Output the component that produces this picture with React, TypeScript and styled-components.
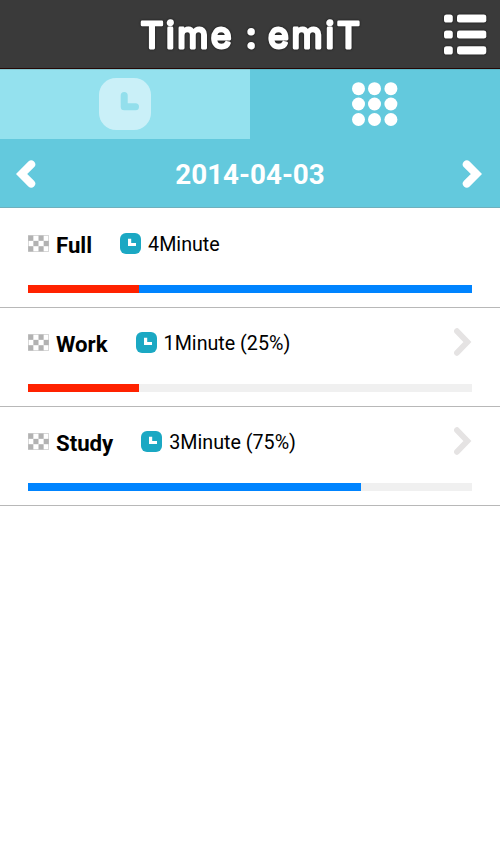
import styled, { createGlobalStyle } from "styled-components";

type Segment = {
  color: string;
  percent: number;
};

type Entry = {
  label: string;
  time: string;
  segments: Segment[];
  hasDetail: boolean;
};

const RED = "#ff2200";
const BLUE = "#0084ff";

const entries: Entry[] = [
  {
    label: "Full",
    time: "4Minute",
    segments: [
      { color: RED, percent: 25 },
      { color: BLUE, percent: 75 },
    ],
    hasDetail: false,
  },
  {
    label: "Work",
    time: "1Minute (25%)",
    segments: [{ color: RED, percent: 25 }],
    hasDetail: true,
  },
  {
    label: "Study",
    time: "3Minute (75%)",
    segments: [{ color: BLUE, percent: 75 }],
    hasDetail: true,
  },
];

const Logo = () => (
  <LogoSvg width="240" height="60" viewBox="0 0 240 60">
    <text x="10.5" y="44" textLength="91" lengthAdjust="spacing">
      Time
    </text>
    <text x="121" y="44" textAnchor="middle">
      :
    </text>
    <text x="138" y="44" textLength="92" lengthAdjust="spacing">
      emiT
    </text>
  </LogoSvg>
);

const MenuIcon = () => (
  <MenuSvg width="44" height="42" viewBox="0 0 44 42">
    {[1.4, 17.4, 33.3].map((y) => (
      <g key={y} fill="#fff">
        <rect x="1" y={y} width="8.8" height="8.2" rx="2.6" />
        <rect x="14" y={y} width="29.3" height="8.2" rx="2.4" />
      </g>
    ))}
  </MenuSvg>
);

const ClockTabIcon = () => (
  <svg width="52" height="52" viewBox="0 0 52 52">
    <rect width="52" height="52" rx="17" fill="#caf0f8" />
    <path
      d="M25.2 17.5V28.8H36.5"
      fill="none"
      stroke="#93dfec"
      strokeWidth="7"
      strokeLinecap="round"
      strokeLinejoin="round"
    />
  </svg>
);

const GridIcon = () => (
  <svg width="46" height="46" viewBox="0 0 46 46">
    {[6.7, 22, 37.5].map((y) =>
      [6.5, 22.5, 38.9].map((x) => (
        <circle key={`${x}-${y}`} cx={x} cy={y} r="6.5" fill="#fff" />
      ))
    )}
  </svg>
);

const CheckerIcon = () => (
  <svg width="21" height="17" viewBox="0 0 21 17">
    <rect x=".5" y=".5" width="20" height="16" fill="#fff" stroke="#d8d8d8" />
    {[0, 1, 2].map((row) =>
      [0, 1, 2, 3]
        .filter((col) => (row + col) % 2 === 0)
        .map((col) => (
          <rect
            key={`${row}-${col}`}
            x={0.2 + col * 5.15}
            y={0.5 + row * 5.35}
            width="5.15"
            height="5.35"
            fill="#b2b2b2"
          />
        ))
    )}
  </svg>
);

const ClockIcon = () => (
  <svg width="21" height="21" viewBox="0 0 21 21">
    <rect width="21" height="21" rx="6" fill="#1ba8c3" />
    <path d="M8 5.7H11.2V10H16V13H8Z" fill="#fff" />
  </svg>
);

const Arrow = ({ flip }: { flip?: boolean }) => (
  <svg width="20" height="28" viewBox="0 0 20 28">
    <g transform={flip ? "translate(20 0) scale(-1 1)" : undefined}>
      <path
        d="M4.8 4.4L14.4 14L4.8 23.6"
        fill="none"
        stroke="#fff"
        strokeWidth="8"
        strokeLinecap="round"
      />
    </g>
  </svg>
);

const DetailArrow = () => (
  <svg width="18" height="28" viewBox="0 0 18 28">
    <path
      d="M3 3.2L13.4 14L3 24.8"
      fill="none"
      stroke="#e5e3e3"
      strokeWidth="5.8"
      strokeLinecap="round"
    />
  </svg>
);

export default function App() {
  return (
    <Page>
      <GlobalStyle />
      <Header>
        <Logo />
        <MenuIcon />
      </Header>
      <Tabs>
        <Tab $muted>
          <ClockTabIcon />
        </Tab>
        <Tab>
          <GridIcon />
        </Tab>
      </Tabs>
      <DateBar>
        <Arrow flip />
        <DateText>2014-04-03</DateText>
        <Arrow />
      </DateBar>
      <List>
        {entries.map((entry) => (
          <Item key={entry.label}>
            <ItemHead>
              <CheckerIcon />
              <Label>{entry.label}</Label>
              <ClockIcon />
              <Time>{entry.time}</Time>
              {entry.hasDetail && <DetailArrow />}
            </ItemHead>
            <Track>
              {entry.segments.map(({ color, percent }) => (
                <Bar
                  key={color}
                  $color={color}
                  style={{ width: `${percent}%` }}
                />
              ))}
            </Track>
          </Item>
        ))}
      </List>
    </Page>
  );
}

const GlobalStyle = createGlobalStyle`
  * {
    box-sizing: border-box;
  }

  body {
    margin: 0;
    background: #fff;
    font-family: Roboto, sans-serif;
  }

  svg {
    display: block;
    flex-shrink: 0;
  }
`;

const Page = styled.div`
  width: 500px;
  min-height: 854px;
  background: #fff;
`;

const Header = styled.header`
  display: grid;
  grid-template-columns: 1fr 240px 1fr;
  align-items: center;
  height: 69px;
  background: #3a3a3a;
  border-bottom: 1px solid #250805;
`;

const LogoSvg = styled.svg`
  grid-column: 2;
  filter: drop-shadow(0 0 1px #111);

  text {
    font-family: Inter, sans-serif;
    font-size: 35.5px;
    font-weight: 400;
    fill: #fff;
    stroke: #fff;
    stroke-width: 2.8px;
    stroke-linecap: round;
    stroke-linejoin: round;
  }
`;

const MenuSvg = styled.svg`
  justify-self: end;
  margin-right: 13px;
  filter: drop-shadow(0 0 1px #111);
`;

const Tabs = styled.nav`
  display: flex;
  height: 70px;
  background: #63c9dd;
`;

const Tab = styled.div<{ $muted?: boolean }>`
  display: flex;
  flex: 1;
  align-items: center;
  justify-content: center;
  padding-bottom: ${({ $muted }) => ($muted ? "1px" : 0)};
  border-top: 1px solid ${({ $muted }) => ($muted ? "#85c9d3" : "#5bb8c9")};
  background: ${({ $muted }) => ($muted ? "#94e1ee" : "#63c9dd")};
`;

const DateBar = styled.div`
  display: flex;
  align-items: center;
  justify-content: space-between;
  height: 69px;
  padding: 1px 18px 0 16px;
  background: #63c9dd;
  border-bottom: 1px solid #6fb0bd;
`;

const DateText = styled.span`
  margin: 3px 0 0 2px;
  color: #fff;
  font-size: 27.8px;
  font-weight: 700;
  line-height: 32px;
`;

const List = styled.ul`
  list-style: none;
  margin: 0;
  padding: 0;
`;

const Item = styled.li`
  height: 99px;
  padding: 20px 28px 0;
  border-bottom: 1px solid #b8b8b8;

  &:first-child {
    height: 100px;
    padding-top: 21px;
  }
`;

const ItemHead = styled.div`
  display: flex;
  align-items: center;
  height: 28px;
  margin-bottom: 28px;

  > svg:last-child {
    margin-left: auto;
  }
`;

const Label = styled.span`
  margin: 3px 28px 0 7px;
  color: #000;
  font-size: 22.2px;
  font-weight: 700;
  line-height: 26px;
`;

const Time = styled.span`
  margin: 3px 0 0 7px;
  color: #000;
  font-size: 19.7px;
  line-height: 24px;
`;

const Track = styled.div`
  display: flex;
  height: 8px;
  background: #f0f0f0;
`;

const Bar = styled.div<{ $color: string }>`
  background: ${({ $color }) => $color};
`;
